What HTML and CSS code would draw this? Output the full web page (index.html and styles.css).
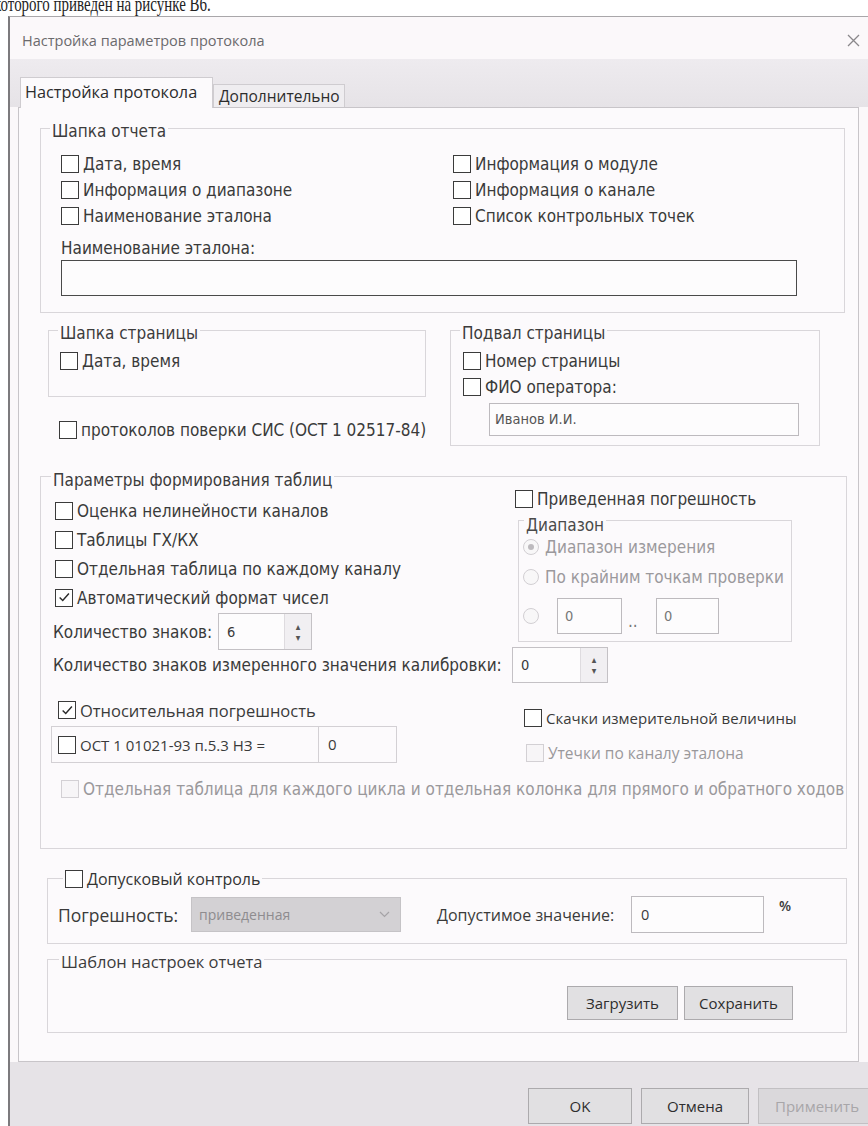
FILE: index.html
```html
<!DOCTYPE html>
<html lang="ru">
<head>
<meta charset="utf-8">
<title>Настройка параметров протокола</title>
<link rel="stylesheet" href="styles.css">
</head>
<body>
<p class="doc-line"><span>которого приведен на рисунке В6.</span></p>

<div class="dialog">
  <div class="titlebar">
    <span class="title">Настройка параметров протокола</span>
    <svg class="close" width="13" height="13" viewBox="0 0 13 13"><path d="M1 1L12 12M12 1L1 12"/></svg>
  </div>

  <div class="tabstrip">
    <div class="tab tab-active">Настройка протокола</div>
    <div class="tab">Дополнительно</div>
  </div>

  <div class="panel">
    <!-- report header -->
    <section class="group g-report">
      <div class="group-title">Шапка отчета</div>
      <div class="g-report-body">
        <div class="check-grid">
          <label class="check"><span class="box"></span>Дата, время</label>
          <label class="check"><span class="box"></span>Информация о модуле</label>
          <label class="check"><span class="box"></span>Информация о диапазоне</label>
          <label class="check"><span class="box"></span>Информация о канале</label>
          <label class="check"><span class="box"></span>Наименование эталона</label>
          <label class="check"><span class="box"></span>Список контрольных точек</label>
        </div>
        <div class="field-label">Наименование эталона:</div>
        <div class="textbox textbox-dark etalon-input"></div>
      </div>
    </section>

    <!-- page header / footer -->
    <div class="page-row">
      <div class="page-left">
        <section class="group g-pagehead">
          <div class="group-title">Шапка страницы</div>
          <div class="g-pagehead-body">
            <label class="check"><span class="box"></span>Дата, время</label>
          </div>
        </section>
        <label class="check protocol-check"><span class="box"></span>протоколов поверки СИС (ОСТ 1 02517-84)</label>
      </div>
      <section class="group g-pagefoot">
        <div class="group-title">Подвал страницы</div>
        <div class="g-pagefoot-body">
          <label class="check"><span class="box"></span>Номер страницы</label>
          <label class="check"><span class="box"></span>ФИО оператора:</label>
          <div class="textbox operator-input">Иванов И.И.</div>
        </div>
      </section>
    </div>

    <!-- table options -->
    <section class="group g-tables">
      <div class="group-title">Параметры формирования таблиц</div>
      <div class="g-tables-body">
        <div class="tables-top">
          <div class="tables-left">
            <label class="check row29"><span class="box"></span>Оценка нелинейности каналов</label>
            <label class="check row29"><span class="box"></span>Таблицы ГХ/КХ</label>
            <label class="check row29"><span class="box"></span>Отдельная таблица по каждому каналу</label>
            <label class="check row29"><span class="box box-checked"><svg viewBox="0 0 17 17" width="15" height="15"><path d="M3 8.5L6.5 12L13.5 4"/></svg></span>Автоматический формат чисел</label>
            <div class="spin-row">
              <span class="spin-label">Количество знаков:</span>
              <div class="spin spin-digits"><span class="spin-value">6</span><span class="spin-btns"><i>▴</i><i>▾</i></span></div>
            </div>
          </div>
          <div class="tables-right">
            <label class="check reduced-check"><span class="box"></span>Приведенная погрешность</label>
            <section class="group g-range">
              <div class="group-title range-title">Диапазон</div>
              <div class="g-range-body">
                <div class="radio-row r1"><span class="radio radio-on"></span>Диапазон измерения</div>
                <div class="radio-row r2"><span class="radio"></span>По крайним точкам проверки</div>
                <div class="radio-row r3"><span class="radio"></span><span class="textbox small-input first">0</span><span class="dots">..</span><span class="textbox small-input">0</span></div>
              </div>
            </section>
          </div>
        </div>

        <div class="spin-row calib-row">
          <span class="spin-label calib-label">Количество знаков измеренного значения калибровки:</span>
          <div class="spin spin-calib"><span class="spin-value">0</span><span class="spin-btns"><i>▴</i><i>▾</i></span></div>
        </div>

        <div class="tables-bottom">
          <div class="bottom-left">
            <label class="check seg rel-check"><span class="box box-checked"><svg viewBox="0 0 17 17" width="15" height="15"><path d="M3 8.5L6.5 12L13.5 4"/></svg></span>Относительная погрешность</label>
            <div class="ost-frame">
              <label class="check seg ost-check"><span class="box"></span>ОСТ 1 01021-93 п.5.3 НЗ =</label>
              <span class="ost-value">0</span>
            </div>
          </div>
          <div class="bottom-right">
            <label class="check seg jump-check"><span class="box"></span>Скачки измерительной величины</label>
            <label class="check seg disabled leak-check"><span class="box"></span>Утечки по каналу эталона</label>
          </div>
        </div>

        <label class="check disabled cycle-check"><span class="box"></span>Отдельная таблица для каждого цикла и отдельная колонка для прямого и обратного ходов</label>
      </div>
    </section>

    <!-- tolerance control -->
    <section class="group g-tol">
      <label class="group-title check seg tol-title"><span class="box"></span>Допусковый контроль</label>
      <div class="g-tol-body">
        <span class="seg tol-label">Погрешность:</span>
        <div class="combo"><span>приведенная</span><svg width="11" height="7" viewBox="0 0 11 7"><path d="M1 1L5.5 5.5L10 1"/></svg></div>
        <span class="seg tol-label2">Допустимое значение:</span>
        <div class="textbox tol-input">0</div>
        <span class="seg percent">%</span>
      </div>
    </section>

    <!-- settings template -->
    <section class="group g-template">
      <div class="group-title seg template-title">Шаблон настроек отчета</div>
      <div class="g-template-body">
        <button class="btn btn-load">Загрузить</button>
        <button class="btn btn-save">Сохранить</button>
      </div>
    </section>
  </div>

  <div class="buttonbar">
    <button class="btn btn-dlg btn-ok">OK</button>
    <button class="btn btn-dlg btn-cancel">Отмена</button>
    <button class="btn btn-dlg btn-apply" disabled>Применить</button>
  </div>
</div>
</body>
</html>
```

FILE: styles.css
```css
* { box-sizing: border-box; }

html, body {
  margin: 0;
  padding: 0;
  background: #ffffff;
  overflow: hidden;
}

body {
  width: 868px;
  height: 1126px;
  font-family: "DejaVu Sans Condensed", "DejaVu Sans", sans-serif;
  font-stretch: condensed;
  font-size: 17px;
  color: #3a3a3a;
}

.seg {
  font-family: "Open Sans", "Noto Sans", sans-serif;
  font-stretch: normal;
  font-size: 16px;
}

/* line of the surrounding document, cut by the top edge */
.doc-line {
  margin: -8px 0 0 -6px;
  height: 24px;
  font-family: "Liberation Serif", serif;
  font-size: 22px;
  line-height: 24px;
  color: #222;
  white-space: nowrap;
}

.doc-line span {
  display: inline-block;
  transform: scaleX(0.68);
  transform-origin: left center;
}

/* dialog window */
.dialog {
  margin-left: 8px;
  width: 872px;
  height: 1130px;
  border-left: 2px solid #7c7a7d;
  border-top: 1px solid #a9a7aa;
  background: #fbf8fa;
}

.titlebar {
  height: 42px;
  display: flex;
  align-items: center;
  justify-content: space-between;
  padding: 0 0 0 12px;
  width: 850px;
}

.title {
  font-family: "Open Sans", "Noto Sans", sans-serif;
  font-stretch: normal;
  font-size: 14.5px;
  color: #6b6a6d;
  margin-top: 5px;
}

.close {
  margin-top: 5px;
  fill: none;
  stroke: #8a888b;
  stroke-width: 1.3;
}

.tabstrip {
  height: 48px;
  display: flex;
  align-items: flex-end;
  padding-left: 10px;
  background: linear-gradient(#eeebef, #e6e3e7);
}

.tab {
  font-family: "Open Sans", "Noto Sans", sans-serif;
  font-stretch: normal;
  font-size: 15.5px;
  color: #2c2c2c;
  height: 23px;
  width: 132px;
  padding-left: 5px;
  line-height: 22px;
  border: 1px solid #cfccd0;
  border-bottom: none;
  background: #efedf0;
  white-space: nowrap;
}

.tab-active {
  width: 193px;
  height: 31px;
  line-height: 28px;
  padding-left: 4px;
  font-size: 16.3px;
  background: #fcfafc;
  margin-bottom: -1px;
  position: relative;
  z-index: 1;
}

.panel {
  margin-left: 8px;
  width: 841px;
  height: 955px;
  border: 1px solid #c8c5c9;
  background: #fcfafc;
}

/* group boxes */
.group {
  border: 1px solid #d9d6da;
}

.group-title {
  width: fit-content;
  margin-top: -8px;
  margin-left: 9px;
  padding: 0 2px;
  line-height: 20px;
  height: 20px;
  background: #fcfafc;
  color: #3c3c3c;
  white-space: nowrap;
}

.check {
  display: flex;
  align-items: center;
  height: 26px;
  white-space: nowrap;
}

.box {
  flex: none;
  width: 18px;
  height: 18px;
  border: 1px solid #3b3b3b;
  background: #fff;
  margin-right: 4px;
  display: flex;
  align-items: center;
  justify-content: center;
}

.box svg {
  fill: none;
  stroke: #2a2a2a;
  stroke-width: 1.6;
}

.disabled { color: #9a989b; }
.disabled .box {
  border-color: #d3d0d4;
  background: #f7f5f7;
}

.textbox {
  border: 1px solid #bdbabe;
  background: #fdfcfd;
  font-size: 14.5px;
}

.textbox-dark { border-color: #4a4a4a; }

/* report header */
.g-report {
  margin: 20px 0 0 21px;
  width: 805px;
}

.g-report-body {
  padding: 10px 0 16px 20px;
}

.check-grid {
  display: grid;
  grid-template-columns: 392px auto;
  grid-auto-rows: 26px;
}

.field-label {
  margin-top: 9px;
  line-height: 20px;
}

.etalon-input {
  margin-top: 2px;
  width: 736px;
  height: 36px;
}

/* page header / footer */
.page-row {
  display: flex;
  align-items: flex-start;
  margin: 17px 0 0 29px;
}

.page-left { width: 378px; flex: none; }

.g-pagehead-body {
  padding: 5px 0 22px 11px;
}

.protocol-check {
  margin: 20px 0 0 11px;
}

.g-pagefoot {
  margin-left: 24px;
  width: 370px;
}

.g-pagefoot-body {
  padding: 5px 0 9px 12px;
}

.operator-input {
  margin: 3px 0 0 26px;
  width: 310px;
  height: 33px;
  line-height: 31px;
  padding-left: 5px;
  color: #555;
}

/* table options */
.g-tables {
  margin: 30px 0 0 21px;
  width: 807px;
}

.g-tables > .group-title {
  margin-top: -7px;
  margin-left: 10px;
}

.g-tables-body {
  padding: 6px 0 48px 14px;
}

.tables-top {
  display: flex;
  align-items: flex-start;
}

.tables-left { width: 460px; flex: none; }

.row29 { height: 29px; }

.spin-row {
  display: flex;
  align-items: center;
  margin-left: -2px;
}

.tables-left .spin-row { margin-top: 1px; }

.spin-label { width: 165px; flex: none; white-space: nowrap; }

.spin {
  display: flex;
  border: 1px solid #c4c1c5;
  background: #fdfcfd;
  font-size: 14.5px;
}

.spin-value {
  flex: 1;
  padding-left: 8px;
  align-self: center;
}

.spin-btns {
  width: 27px;
  border-left: 1px solid #dedbdf;
  display: flex;
  flex-direction: column;
  justify-content: center;
  align-items: center;
  background: #f1eff2;
}

.spin-btns i {
  font-style: normal;
  font-size: 10px;
  line-height: 11px;
  color: #555;
}

.spin-digits { width: 94px; height: 37px; }

.tables-right {
  margin-top: -8px;
}

.reduced-check { height: 22px; }

.g-range {
  margin: 10px 0 0 3px;
  width: 274px;
}

.range-title {
  margin-top: -4px;
  margin-left: 5px;
  line-height: 16px;
  height: 16px;
  color: #4a4a4a;
}

.g-range-body {
  padding: 2px 0 7px 4px;
  color: #9b999c;
}

.radio-row {
  display: flex;
  align-items: center;
  height: 24px;
  white-space: nowrap;
}

.r2 { margin-top: 6px; }
.r3 { margin-top: 9px; height: 36px; }

.radio {
  flex: none;
  width: 16px;
  height: 16px;
  border: 1px solid #d2cfd3;
  border-radius: 50%;
  background: #f8f7f8;
  margin-right: 6px;
  display: flex;
  align-items: center;
  justify-content: center;
}

.radio-on::after {
  content: "";
  width: 6px;
  height: 6px;
  border-radius: 50%;
  background: #bdbabe;
}

.small-input {
  display: block;
  height: 36px;
  line-height: 34px;
  padding-left: 7px;
  color: #777;
}

.small-input.first { width: 65px; margin-left: 12px; }
.small-input:last-child { width: 63px; }

.dots {
  width: 34px;
  padding-left: 6px;
  color: #777;
  margin-top: 10px;
}

.calib-row { margin-top: -3px; }
.calib-label { width: 459px; }
.spin-calib { width: 96px; height: 36px; }

.tables-bottom {
  display: flex;
  align-items: flex-start;
}

.bottom-left {
  width: 469px;
  flex: none;
  padding-top: 16px;
}

.rel-check {
  height: 22px;
  margin-left: 3px;
  font-size: 16.5px;
}

.ost-frame {
  margin: 5px 0 0 -4px;
  width: 346px;
  height: 37px;
  border: 1px solid #d3d0d4;
  display: flex;
  align-items: center;
  padding-left: 6px;
}

.ost-check { width: 260px; font-size: 15px; }

.ost-value {
  align-self: stretch;
  border-left: 1px solid #d3d0d4;
  padding: 7px 0 0 9px;
  flex: 1;
  font-family: "Open Sans", sans-serif;
  font-stretch: normal;
  font-size: 15px;
}

.bottom-right {
  padding-top: 24px;
}

.bottom-right .check { height: 22px; }
.jump-check { font-size: 15px; }
.leak-check { margin: 13px 0 0 2px; font-size: 15.5px; }

.cycle-check {
  margin: 14px 0 0 6px;
  height: 22px;
}

/* tolerance control */
.g-tol {
  margin: 29px 0 0 28px;
  width: 800px;
}

.tol-title {
  margin-top: -11px;
  margin-left: 15px;
  height: 22px;
  color: #333;
}

.g-tol-body {
  display: flex;
  align-items: center;
  padding: 6px 0 10px 10px;
}

.tol-label { width: 133px; flex: none; font-size: 17.5px; }

.combo {
  width: 210px;
  height: 35px;
  background: #d3d1d4;
  border: 1px solid #c5c3c6;
  display: flex;
  align-items: center;
  justify-content: space-between;
  padding: 0 10px 0 7px;
  color: #8e8c8f;
  font-family: "Open Sans", sans-serif;
  font-stretch: normal;
  font-size: 14px;
}

.combo svg {
  fill: none;
  stroke: #a5a3a6;
  stroke-width: 1.2;
}

.tol-label2 { margin-left: 36px; width: 194px; flex: none; }

.tol-input {
  width: 133px;
  height: 37px;
  line-height: 35px;
  padding-left: 9px;
  font-family: "Open Sans", sans-serif;
  font-stretch: normal;
}

.percent {
  margin-left: 15px;
  align-self: flex-start;
  font-weight: 600;
  font-size: 14px;
}

/* settings template */
.g-template {
  margin: 15px 0 0 28px;
  width: 800px;
}

.template-title {
  margin-left: 11px;
  font-size: 16.5px;
}

.g-template-body {
  display: flex;
  justify-content: flex-end;
  gap: 6px;
  padding: 14px 53px 12px 0;
}

.btn {
  font-family: "Open Sans", "Noto Sans", sans-serif;
  font-size: 15px;
  color: #2e2e2e;
  background: #e1e0e2;
  border: 1px solid #acaaad;
  padding: 0;
  height: 34px;
}

.btn-load { width: 111px; }
.btn-save { width: 109px; }

/* bottom buttons */
.buttonbar {
  height: 70px;
  display: flex;
  align-items: flex-start;
  gap: 9px;
  padding: 26px 0 0 518px;
  background: #e6e3e7;
}

.btn-dlg { height: 36px; }
.btn-ok { width: 104px; }
.btn-cancel { width: 108px; }
.btn-apply {
  width: 118px;
  color: #a8a6a9;
  background: #dad8db;
  border-color: #c2c0c3;
}
```
